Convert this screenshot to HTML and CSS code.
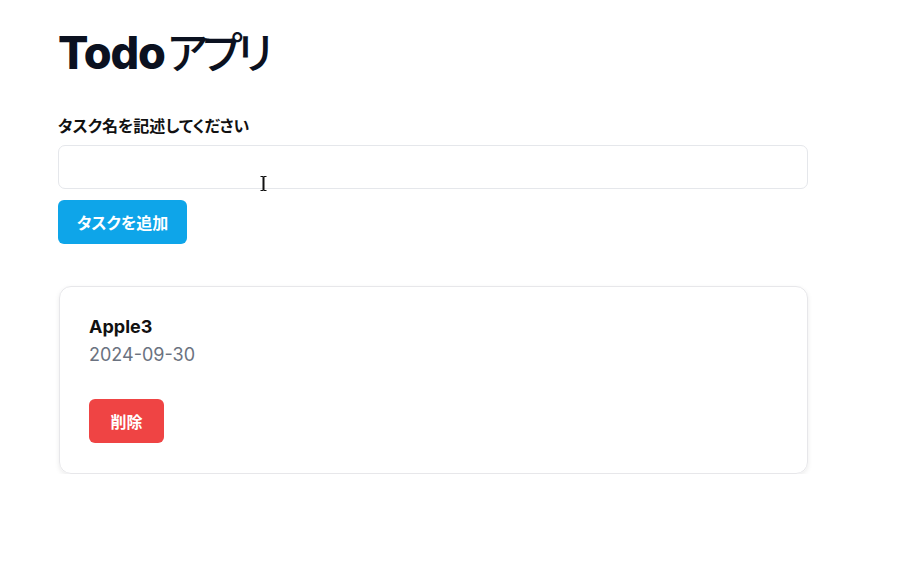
FILE: index.html
```html
<!DOCTYPE html>
<html lang="ja">
<head>
<meta charset="utf-8">
<title>Todoアプリ</title>
<link rel="stylesheet" href="styles.css">
</head>
<body>
<main class="app">
  <h1 class="title">Todo<span class="title-jp">アプリ</span></h1>
  <form class="task-form">
    <label class="label" for="task">タスク名を記述してください</label>
    <div class="input-wrap">
      <input id="task" class="input" type="text">
      <svg class="cursor" width="7" height="15" viewBox="0 0 7 15"><path d="M0.5 0.5h2.5v14h-2.5M6.5 0.5h-2.5v14h2.5M3.5 0.5v14" fill="none" stroke="#111" stroke-width="1"/></svg>
    </div>
    <button type="button" class="btn btn-add">タスクを追加</button>
  </form>
  <ul class="list">
    <li class="card">
      <h2 class="card-title">Apple3</h2>
      <p class="card-date">2024-09-30</p>
      <button type="button" class="btn btn-delete">削除</button>
    </li>
  </ul>
</main>
</body>
</html>
```
FILE: styles.css
```css
* { box-sizing: border-box; }
html, body { margin: 0; padding: 0; background: #fff; }
body {
  font-family: Inter, "Noto Sans CJK JP", sans-serif;
  color: #0b1120;
}
.app {
  width: 750px;
  margin-left: 58px;
  padding-top: 22px;
}
.title {
  margin: 0;
  font-size: 45px;
  line-height: 56px;
  font-weight: 800;
  letter-spacing: -1.2px;
}
.title-jp {
  font-family: "Noto Sans CJK JP", sans-serif;
  font-size: 43px;
  font-weight: 500;
  letter-spacing: -5px;
  font-feature-settings: "palt";
  margin-left: 3px;
}
.task-form {
  display: flex;
  flex-direction: column;
  align-items: flex-start;
  margin-top: 32px;
}
.label {
  font-family: "Noto Sans CJK JP", sans-serif;
  font-feature-settings: "palt";
  font-size: 16px;
  font-weight: 700;
  line-height: 24px;
  color: #111;
}
.input-wrap {
  position: relative;
  width: 750px;
  margin-top: 8px;
}
.input {
  display: block;
  width: 100%;
  height: 44px;
  border: 1px solid #e5e7eb;
  border-radius: 7px;
  outline: none;
  padding: 0 12px;
  font-size: 16px;
}
.cursor {
  position: absolute;
  left: 202px;
  top: 31px;
}
.btn {
  border: none;
  border-radius: 6px;
  color: #fff;
  font-family: "Noto Sans CJK JP", sans-serif;
  font-feature-settings: "palt";
  font-size: 16px;
  font-weight: 700;
  height: 44px;
  padding: 0;
  white-space: nowrap;
  cursor: pointer;
}
.btn-add {
  margin-top: 11px;
  width: 129px;
  background: #0ea5e9;
}
.list {
  list-style: none;
  margin: 42px 0 0;
  padding: 0;
}
.card {
  margin-left: 1px;
  width: 749px;
  border: 1px solid #e7e7ea;
  border-radius: 12px;
  box-shadow: 0 2px 5px rgba(0,0,0,0.08);
  padding: 26px 29px 30px;
}
.card-title {
  margin: 0;
  font-size: 18px;
  line-height: 28px;
  font-weight: 700;
  color: #111;
}
.card-date {
  margin: 0;
  font-size: 18px;
  line-height: 28px;
  color: #6b7280;
}
.btn-delete {
  margin-top: 30px;
  width: 75px;
  background: #ef4444;
}
```
